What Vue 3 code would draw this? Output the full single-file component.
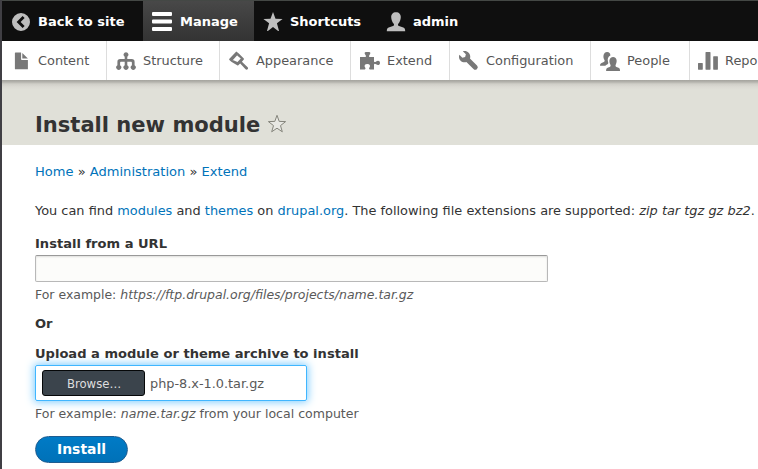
<script setup>
const tabs = [
  { label: 'Back to site', icon: 'back', width: 141 },
  { label: 'Manage', icon: 'menu', width: 111, active: true },
  { label: 'Shortcuts', icon: 'star', width: 123 },
  { label: 'admin', icon: 'user', width: 100 },
]
const items = [
  { label: 'Content', icon: 'file', width: 105 },
  { label: 'Structure', icon: 'tree', width: 113 },
  { label: 'Appearance', icon: 'brush', width: 131 },
  { label: 'Extend', icon: 'puzzle', width: 99 },
  { label: 'Configuration', icon: 'wrench', width: 141 },
  { label: 'People', icon: 'people', width: 99 },
  { label: 'Reports', icon: 'chart', width: 120 },
]
const icons = {
  back: 'M10 1a9 9 0 1 0 0 18a9 9 0 0 0 0-18zM11.6 4l2 2L9.600 10l4 4-2 2L5.600 10z',
  menu: 'M1 0h18a1 1 0 0 1 1 1v2a1 1 0 0 1-1 1H1a1 1 0 0 1-1-1V1a1 1 0 0 1 1-1zM1 7.5h18a1 1 0 0 1 1 1v2a1 1 0 0 1-1 1H1a1 1 0 0 1-1-1v-2a1 1 0 0 1 1-1zM1 15h18a1 1 0 0 1 1 1v2a1 1 0 0 1-1 1H1a1 1 0 0 1-1-1v-2a1 1 0 0 1 1-1z',
  star: 'M10 0l2.5 6.8 7.1.2-5.7 4.3 2 7.1c.1.6-.3.8-.8.5L10 15l-5.1 3.9c-.5.3-.9.1-.8-.5l2-7.1L.4 7l7.1-.2z',
  user: 'M10 .2c3.1 0 4.9 2.1 4.8 5.1-.1 2.500-1 5-2.500 6.400-.7.900-.3 1.900.7 2.300l4.300 1.500c1.400.5 1.900 1.500 1.900 3.700H.8c0-2.200.5-3.200 1.900-3.700L7 14c1-.4 1.400-1.400.7-2.300C6.200 10.300 5.300 7.800 5.200 5.300 5.100 2.300 6.900.2 10 .2z',
  file: 'M1.500 1.500h5.600v6.700c0 .5.3.8.8.8h6v9.300H1.500c-.4 0-.6-.2-.6-.6V2.100c0-.4.2-.6.600-.6zM8.300 2l5.600 5.600H8.300z',
  tree: 'M10 1.200a2.500 2.500 0 0 1 1.300 4.600V8.100h4.500c1.800 0 2.800 1 2.800 2.800v3.300a2.500 2.500 0 1 1-2.700 0v-2.400c0-.7-.4-1.100-1.100-1.100h-3.500v3.500a2.500 2.500 0 1 1-2.600 0v-3.500H5.200c-.7 0-1.100.4-1.100 1.100v2.400a2.500 2.500 0 1 1-2.700 0v-3.300c0-1.800 1-2.800 2.800-2.800h4.500V5.800A2.500 2.500 0 0 1 10 1.200z',
  brush: 'M7.300.5l2.500 2.100-7.500 8.200L.4 9c-.4-.4-.4-.8 0-1.200zM9.800 2.600l5 5c.3.300.3.700 0 1l-1.900 2.100 5.500 5.200c.8.800.9 1.600.2 2.300s-1.500.6-2.300-.2l-5.100-5.500-1.900 1.700c-.4.400-.7.400-1.100 0l-5.900-3.400 1.500-1.900 4.700 2.200 3.300-3.600-3.700-3.100z',
  puzzle: 'M0 6h5.300c.9-.5.900-1.200.2-2.100C3.900 2 4.700.9 6.100 1h2.800c1.400-.1 2.200 1 .6 2.900-.7.900-.7 1.600.2 2.100H14v4.500c.4.700 1.200.7 2.100 0 1.900-1.500 3.900-.6 3.900 1.400 0 1.900-2 2.900-3.900 1.400-.9-.7-1.700-.7-2.100.1v5.100h-4.200c-1-.5-.9-1.300-.2-2.200 1-1.700.2-3.400-2.300-3.400s-3.300 1.700-2.300 3.400c.7.900.8 1.700-.2 2.200H0z',
  people: 'M7 1.100c2.100-.1 3.400 1.300 3.400 3.400-2.300.9-3.200 3.400-2.400 6.200.4 1.200.5 1.900-.5 2.500-1 .5-1.700.9-2.200 1.600H0c.1-1.600.4-2.200 1.600-2.800l2.200-1c1-.5 1.200-1.200.5-2.200C2.600 6 3.500 1.200 7 1.100zM13.100 6c3.600 0 4.400 4 2.800 7.300-.7 1.500-.5 2.200.5 2.600l2.100.8c1.200.5 1.500 1.300 1.500 3.300H6.100c0-2 .4-2.800 1.500-3.300l2.100-.8c1-.4 1.200-1.100.5-2.600C8.600 10 9.500 6 13.100 6z',
  wrench: 'M14.416 11.586l-.01-.009L8.750 5.921C8.900 5.472 9.002 5 9.002 4.500 9.002 2.015 6.986 0 4.500 0c-.505 0-.981.102-1.434.255l2.431 2.431-.588 2.196-2.196.588L.268 3.025C.106 3.489 0 3.981 0 4.500 0 6.986 2.014 9 4.500 9c.5 0 .972-.102 1.421-.251l5.667 5.665a2 2 0 0 0 2.828-2.828z',
  chart: 'M.5 12h3.800c.3 0 .5.2.5.5v5.700c0 .3-.2.500-.5.500H.5c-.3 0-.5-.2-.5-.5v-5.700c0-.3.200-.5.500-.5zM8 1h4c.3 0 .5.200.5.500v16.700c0 .3-.2.500-.5.500H8c-.3 0-.5-.2-.5-.5V1.500C7.500 1.200 7.700 1 8 1zM15.700 5.300h3.700c.3 0 .5.200.5.500v12.400c0 .3-.2.500-.5.500h-3.700c-.3 0-.5-.2-.5-.5V5.800c0-.3.200-.5.500-.5z',
}
</script>

<template>
  <div class="page">
    <nav class="bar">
      <a v-for="t in tabs" :key="t.label" class="tab" :class="{ active: t.active }" :style="{ width: t.width + 'px' }">
        <svg class="icon" :class="t.icon" viewBox="0 0 20 20"><path fill-rule="evenodd" :d="icons[t.icon]" /></svg>
        <span>{{ t.label }}</span>
      </a>
    </nav>
    <nav class="tray">
      <a v-for="i in items" :key="i.label" class="item" :style="{ width: i.width + 'px' }">
        <svg class="icon" :class="i.icon" :viewBox="i.icon === 'wrench' ? '0 0 16 16' : '0 0 20 20'"><path fill-rule="evenodd" :d="icons[i.icon]" /></svg>
        <span>{{ i.label }}</span>
      </a>
    </nav>
    <header class="header">
      <h1>Install new module</h1>
      <svg class="outline" viewBox="0 0 20 20"><path d="M10 1.300l2.200 6.100 6.400.2-5.100 4 1.800 6.200-5.300-3.600-5.300 3.600 1.800-6.200-5.100-4 6.400-.2z" /></svg>
    </header>
    <main class="content">
      <div class="crumbs"><a>Home</a> » <a>Administration</a> » <a>Extend</a></div>
      <p class="intro">You can find <a>modules</a> and <a>themes</a> on <a>drupal.org</a>. The following file extensions are supported: <em>zip tar tgz gz bz2</em>.</p>
      <label class="label" for="url">Install from a URL</label>
      <input id="url" class="url" type="text">
      <div class="help">For example: <em>https://ftp.drupal.org/files/projects/name.tar.gz</em></div>
      <div class="label or">Or</div>
      <div class="label">Upload a module or theme archive to install</div>
      <div class="upload">
        <button class="browse">Browse…</button>
        <span>php-8.x-1.0.tar.gz</span>
      </div>
      <div class="help archive">For example: <em>name.tar.gz</em> from your local computer</div>
      <button class="install">Install</button>
    </main>
  </div>
</template>

<style>
body { margin: 0; overflow: hidden; }
</style>

<style scoped>
* { box-sizing: border-box; }
.page {
  width: 758px;
  height: 469px;
  overflow: hidden;
  border-left: 2px solid #403f44;
  background: #fff;
  color: #333;
  font: 13px/20px "DejaVu Sans", sans-serif;
}
.bar { display: flex; height: 41px; border-top: 1px solid #444845; background: #0f0f0f; }
.tab, .item { display: flex; flex: none; align-items: center; white-space: nowrap; }
.tab { gap: 8px; padding: 1px 0 0 9px; color: #fff; font-weight: bold; }
.active { background: linear-gradient(#484848, #333); }
.icon { flex: none; width: 20px; height: 20px; fill: #bebebe; }
.active .icon { fill: #fff; }
.tab .back { margin-right: -1px; }
.tab .star, .tab .user { margin-right: -1px; }
.tray { display: flex; height: 39px; background: #fff; overflow: hidden; }
.item { gap: 7px; padding-left: 9px; border-right: 1px solid #ddd; color: #565656; font-size: 12.900px; }
.item:first-child { padding-left: 12px; gap: 4px; }
.item:last-child { padding-left: 8px; }
.item .icon { fill: #787878; }
.header {
  display: flex;
  height: 65px;
  padding: 31px 0 0 33px;
  background: linear-gradient(#a5a49e 0, #b4b3ad 2px, #d0cfc8 4px, #dbdad3 7px, #e0e0d8 10px);
}
h1 { margin: 0; font-size: 21.050px; line-height: 27px; }
.outline { width: 20px; height: 20px; margin: 3px 0 0 7px; fill: #e8e8e3; stroke: #85857c; stroke-width: 1; }
.content { padding: 17px 0 0 33px; }
a { color: #0073ba; }
.tab { color: #fff; }
.item { color: #565656; }
.crumbs { height: 20px; font-size: 13.050px; }
.intro { margin: 19px 0 13px; white-space: nowrap; font-size: 12.920px; }
.label { display: block; height: 20px; font-weight: bold; font-size: 13.060px; }
.url {
  display: block;
  width: 513px;
  height: 27px;
  margin-top: 1px;
  border: 1px solid #b8b8b8;
  border-top-color: #999;
  border-radius: 2px;
  background: #fcfcfa;
  box-shadow: inset 0 1px 2px rgba(0, 0, 0, .12);
}
.help { height: 20px; margin-top: 3px; color: #595959; font-size: 12.480px; }
.archive { font-size: 12.560px; }
.or { margin: 9px 0 10px; }
.upload {
  display: flex;
  align-items: center;
  gap: 5px;
  width: 272px;
  height: 36px;
  margin-top: 1px;
  padding-left: 6px;
  border: 1px solid #40b6ff;
  border-radius: 2px;
  color: #595959;
  font-size: 12.850px;
  box-shadow: 0 0 8px 1px #7acbff;
}
.upload span { padding-top: 1px; }
.browse {
  width: 103px;
  height: 26px;
  padding: 1px 0 0 1px;
  border: 1px solid #050708;
  border-radius: 3px;
  background: #3b444c;
  color: #dedede;
  font: 11.700px/22px "DejaVu Sans", sans-serif;
}
.install {
  display: block;
  width: 93px;
  height: 27px;
  margin-top: 12px;
  padding: 0 0 1px;
  border: 1px solid #1e5c90;
  border-radius: 14px;
  background: linear-gradient(#007bc6, #0071b8);
  color: #fff;
  font: bold 13.900px/22px "DejaVu Sans", sans-serif;
}
</style>
